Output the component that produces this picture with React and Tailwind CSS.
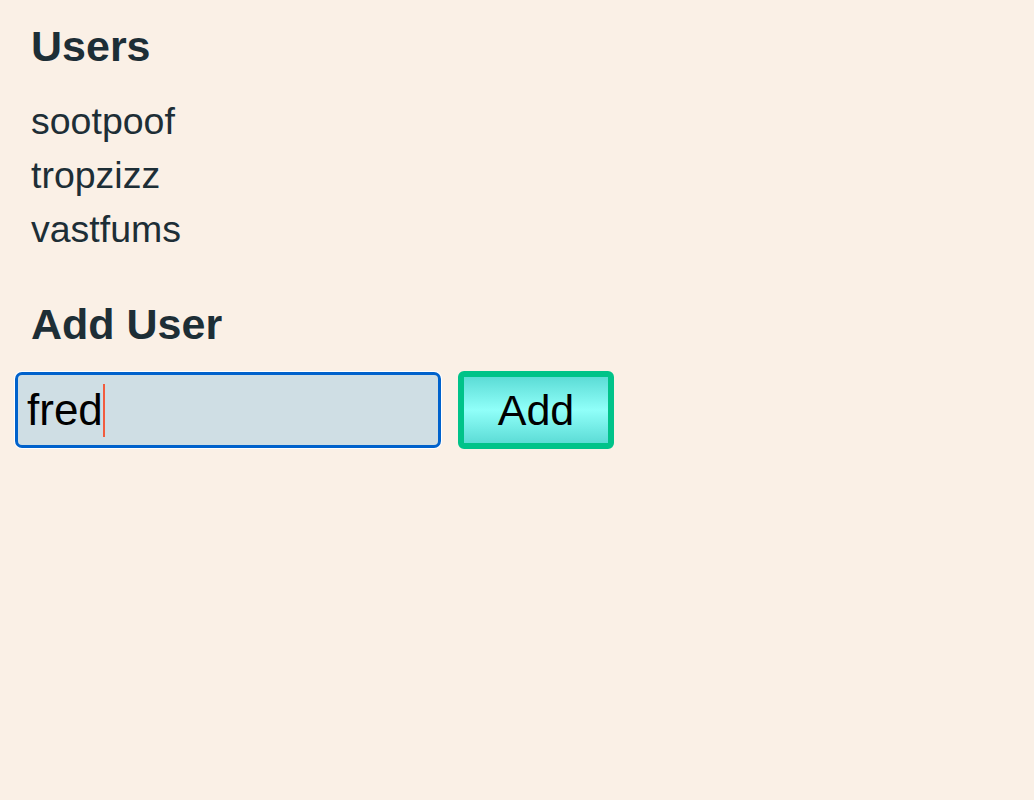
export default function App() {
  const users = ['sootpoof', 'tropzizz', 'vastfums'];

  return (
    <div className="min-h-[800px] w-full bg-[#faf0e6] text-[#1d2e36] font-['Liberation_Sans',Arial,sans-serif] px-[14px] pt-[22px]">
      <h2 className="pl-[17px] text-[43px] font-bold leading-[48px]">Users</h2>
      <ul className="pl-[17px] mt-[24px] text-[37.5px] leading-[54px]">
        {users.map((u) => (
          <li key={u}>{u}</li>
        ))}
      </ul>
      <h2 className="pl-[17px] mt-[44px] text-[43px] font-bold leading-[48px]">Add User</h2>
      <div className="mt-[23px] flex items-center gap-[16px]">
        <div className="rounded-[8px] p-px bg-white">
          <div className="w-[426px] h-[76px] rounded-[7px] border-[3px] border-[#0062cc] bg-[#cfdee4] px-[9px] flex items-center text-[44px] text-black">
            <span>fred</span>
            <span className="inline-block w-[2px] h-[53px] bg-[#f25c3e]"></span>
          </div>
        </div>
        <button
          type="button"
          className="w-[156px] h-[78px] rounded-[6px] border-[6px] border-[#00c389] bg-[linear-gradient(to_bottom,#5cdcd6,#90fff9_50%,#5cdcd6)] text-[43px] text-black"
        >
          Add
        </button>
      </div>
    </div>
  );
}
